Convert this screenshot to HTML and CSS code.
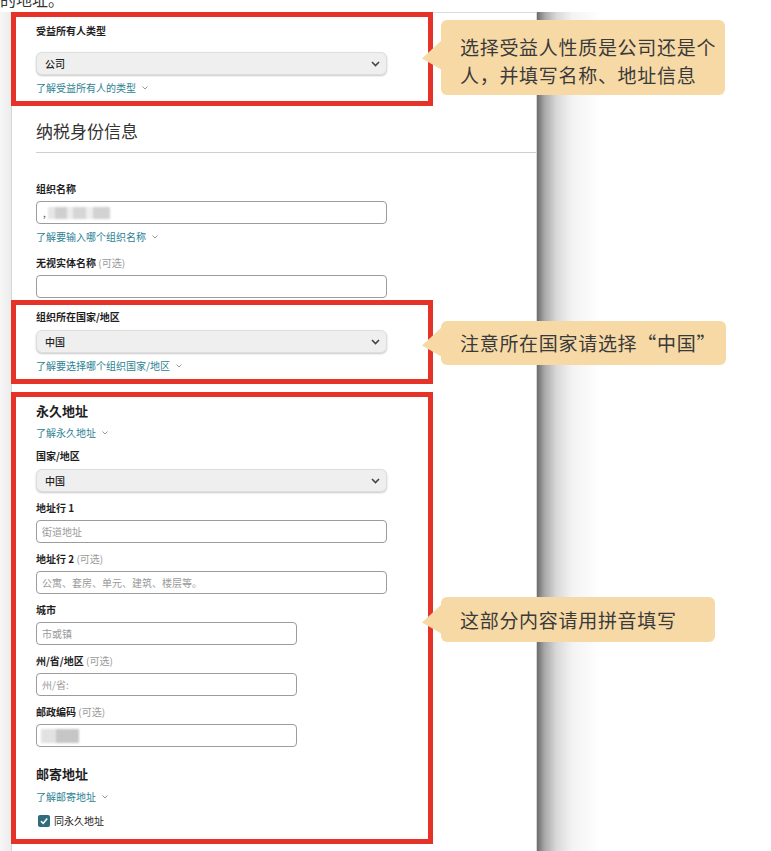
FILE: index.html
```html
<!DOCTYPE html>
<html lang="zh-CN">
<head>
  <meta charset="UTF-8">
  <title>受益所有人信息</title>
  <link rel="stylesheet" href="styles.css">
</head>
<body>
<p class="caption">的地址。</p>
<div class="scene">
  <div class="gutter"></div>
  <div class="panel">

    <section class="mark mark-first">
      <label class="lbl">受益所有人类型</label>
      <div class="select sel-gap-lg">
        <span>公司</span>
        <svg width="9" height="6" viewBox="0 0 9 6"><polyline points="1,1 4.5,4.5 8,1" fill="none" stroke="#444" stroke-width="1.6"/></svg>
      </div>
      <a class="more" href="#">了解受益所有人的类型 <svg width="6" height="4" viewBox="0 0 6 4"><polyline points="0.5,0.5 3,3 5.5,0.5" fill="none" stroke="#999" stroke-width="1"/></svg></a>
    </section>

    <h2 class="section-title">纳税身份信息</h2>

    <div class="field first-field">
      <label class="lbl">组织名称</label>
      <div class="input"><span class="comma">,</span><span class="redact redact-name"></span></div>
      <a class="more" href="#">了解要输入哪个组织名称 <svg width="6" height="4" viewBox="0 0 6 4"><polyline points="0.5,0.5 3,3 5.5,0.5" fill="none" stroke="#999" stroke-width="1"/></svg></a>
    </div>

    <div class="field">
      <label class="lbl">无视实体名称 <span class="opt">(可选)</span></label>
      <div class="input"></div>
    </div>

    <section class="mark mark-country">
      <label class="lbl">组织所在国家/地区</label>
      <div class="select">
        <span>中国</span>
        <svg width="9" height="6" viewBox="0 0 9 6"><polyline points="1,1 4.5,4.5 8,1" fill="none" stroke="#444" stroke-width="1.6"/></svg>
      </div>
      <a class="more" href="#">了解要选择哪个组织国家/地区 <svg width="6" height="4" viewBox="0 0 6 4"><polyline points="0.5,0.5 3,3 5.5,0.5" fill="none" stroke="#999" stroke-width="1"/></svg></a>
    </section>

    <section class="mark mark-address">
      <h3 class="sub">永久地址</h3>
      <a class="more" href="#">了解永久地址 <svg width="6" height="4" viewBox="0 0 6 4"><polyline points="0.5,0.5 3,3 5.5,0.5" fill="none" stroke="#999" stroke-width="1"/></svg></a>

      <div class="field">
        <label class="lbl">国家/地区</label>
        <div class="select">
          <span>中国</span>
          <svg width="9" height="6" viewBox="0 0 9 6"><polyline points="1,1 4.5,4.5 8,1" fill="none" stroke="#444" stroke-width="1.6"/></svg>
        </div>
      </div>

      <div class="field">
        <label class="lbl">地址行 1</label>
        <div class="input"><span class="ph">街道地址</span></div>
      </div>

      <div class="field">
        <label class="lbl">地址行 2 <span class="opt">(可选)</span></label>
        <div class="input"><span class="ph">公寓、套房、单元、建筑、楼层等。</span></div>
      </div>

      <div class="field">
        <label class="lbl">城市</label>
        <div class="input short"><span class="ph">市或镇</span></div>
      </div>

      <div class="field">
        <label class="lbl">州/省/地区 <span class="opt">(可选)</span></label>
        <div class="input short"><span class="ph">州/省:</span></div>
      </div>

      <div class="field">
        <label class="lbl">邮政编码 <span class="opt">(可选)</span></label>
        <div class="input short"><span class="redact redact-zip"></span></div>
      </div>

      <h3 class="sub sub-mail">邮寄地址</h3>
      <a class="more more-mail" href="#">了解邮寄地址 <svg width="6" height="4" viewBox="0 0 6 4"><polyline points="0.5,0.5 3,3 5.5,0.5" fill="none" stroke="#999" stroke-width="1"/></svg></a>
      <div class="check">
        <svg width="12" height="12" viewBox="0 0 12 12"><rect width="12" height="12" rx="2" fill="#2f6c7c"/><polyline points="3,6.2 5.2,8.4 9.2,3.6" fill="none" stroke="#fff" stroke-width="1.6"/></svg>
        <span>同永久地址</span>
      </div>
    </section>

  </div>
  <div class="edge"></div>

  <div class="note note-type">选择受益人性质是公司还是个人，并填写名称、地址信息</div>
  <div class="note note-country">注意所在国家请选择“中国”</div>
  <div class="note note-address">这部分内容请用拼音填写</div>
</div>
</body>
</html>
```

FILE: styles.css
```css
:root{
  --red:#e5332a;
  --teal:#2b8293;
  --peach:#f6d9a5;
  --ink:#222;
}
*{box-sizing:border-box;margin:0;padding:0}
body{background:#fff;font-family:"Noto Sans CJK SC","Noto Sans",sans-serif;color:var(--ink);overflow:hidden}

.caption{font-size:16px;line-height:20px;color:#333;margin-top:-11px;height:23px}

.scene{position:relative;display:flex;align-items:stretch;min-height:850px}
.gutter{width:12px;background:linear-gradient(to right,#f6f6f6,#ececec);border-right:1px solid #d6d6d6}
.panel{width:525px;background:#fff;border-top:1px solid #dcdcdc;border-right:1px solid #d8d8d8;padding-left:24px}
.edge{width:64px;background:linear-gradient(to right,#6c6c6c,#a8a8a8 12%,#d8d8d8 30%,#f3f3f3 55%,#fff)}

/* red annotation boxes */
.mark{border:5px solid var(--red);width:422px;margin-left:-25px;padding:0 0 6px 20px}
.mark-first{margin-top:-1px;padding-top:7px}
.mark-country{margin-top:2px;padding-top:5px}
.mark-address{margin-top:8px;padding-top:5px;padding-bottom:11px}

.lbl{display:block;font-size:10px;line-height:14px;font-weight:700;color:#1e1e1e}
.opt{font-weight:400;color:#9a9a9a}

.select{width:351px;height:23px;margin-top:6px;background:#efefef;border:1px solid #dedede;border-radius:6px;box-shadow:0 1px 2px rgba(0,0,0,.22);display:flex;align-items:center;justify-content:space-between;padding:0 6px 0 8px;font-size:10px;font-weight:500;color:#222}
.sel-gap-lg{margin-top:14px}

.input{width:351px;height:23px;margin-top:5px;border:1px solid #9c9c9c;border-radius:4px;display:flex;align-items:center;padding-left:5px;font-size:10px;background:#fff}
.input.short{width:261px}
.ph{color:#9a9a9a}
.comma{color:#555;margin-left:1px;margin-right:2px;line-height:1}
.redact{display:block;height:12px;filter:blur(1.2px)}
.redact-name{width:62px;background:linear-gradient(to right,#e6e6e6 0 12%,#cfcfcf 12% 30%,#ececec 30% 40%,#d6d6d6 40% 62%,#eee 62% 72%,#d2d2d2 72% 100%)}
.redact-zip{width:38px;height:14px;margin-left:-1px;background:linear-gradient(to right,#e2e2e2 0 40%,#c6c6c6 40% 100%)}

.more{display:flex;align-items:center;gap:6px;margin-top:6px;font-size:10px;line-height:14px;color:var(--teal);text-decoration:none}
.more-mail{margin-top:7px}

.section-title{font-size:17px;line-height:24px;font-weight:400;color:#333;margin-top:13px;padding-bottom:9px;border-bottom:1px solid #cfcfcf}

.field{margin-top:9px}
.first-field{margin-top:29px}
.panel > .field + .field{margin-top:12px}

.sub{font-size:13px;line-height:18px;font-weight:700;color:#1e1e1e}
.sub-mail{margin-top:18px}
.check{display:flex;align-items:center;gap:4px;margin-top:10px;padding-left:2px;font-size:10px;line-height:14px;color:#222}

/* callouts drawn over the screenshot */
.note{position:absolute;left:441px;background:var(--peach);border-radius:6px;padding:0 4px 0 19px;font-size:19px;letter-spacing:.7px;line-height:28px;color:#3a3a3a;z-index:2}
.note::before{content:"";position:absolute;left:-19px;width:20px;height:30px;background:var(--peach);clip-path:polygon(0 62%,100% 0,100% 100%)}
.note-type{top:8px;width:284px;padding-top:13px;padding-bottom:6px}
.note-type::before{top:20px}
.note-country{top:309px;width:285px;padding-top:8px;padding-bottom:8px}
.note-country::before{top:6px}
.note-address{top:585px;width:274px;padding-top:9px;padding-bottom:8px}
.note-address::before{top:7px}
```
